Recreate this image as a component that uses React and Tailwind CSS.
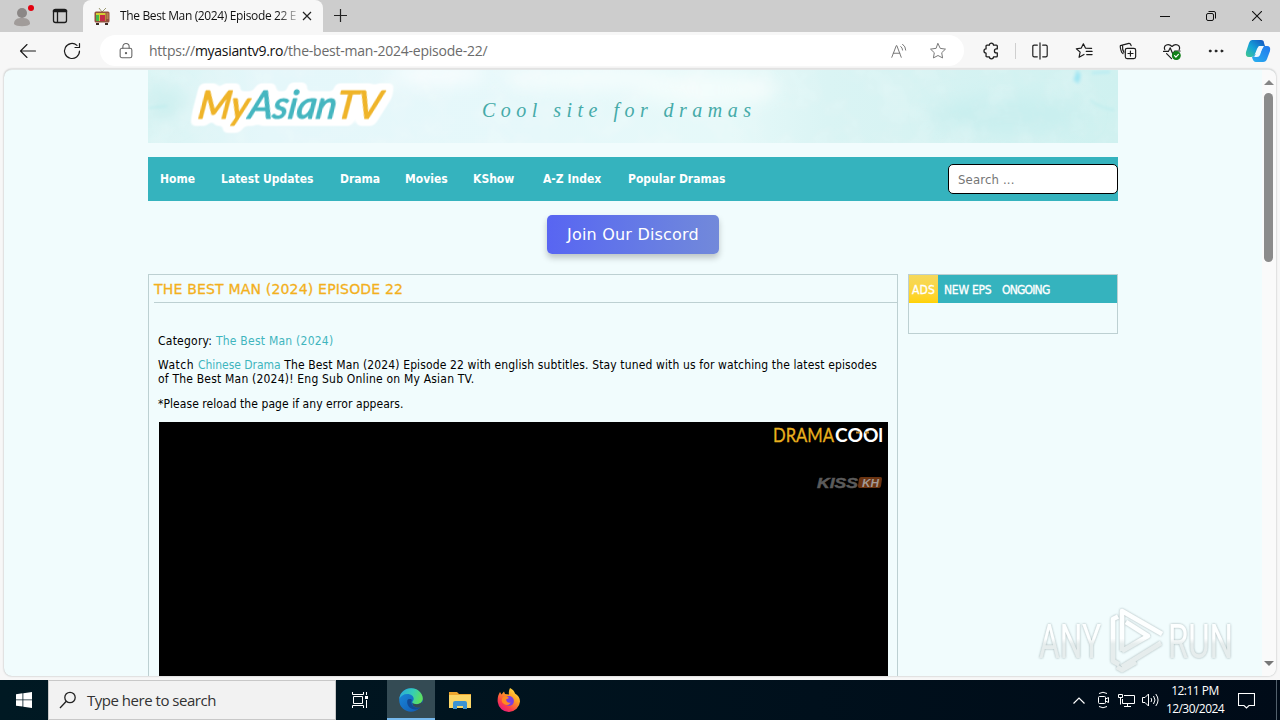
import React from "react";

const ui = "font-['Open_Sans','Noto_Sans',sans-serif]";
const tahoma = "font-['DejaVu_Sans_Condensed','DejaVu_Sans',sans-serif]";
const wide = "font-['DejaVu_Sans',sans-serif]";

function Icon({ size = 20, className = "", children, sw = 1.1, color = "#1b1b1b" }) {
  return (
    <svg width={size} height={size} viewBox="0 0 20 20" fill="none" stroke={color} strokeWidth={sw} strokeLinecap="round" strokeLinejoin="round" className={"shrink-0 " + className}>
      {children}
    </svg>
  );
}

function TabStrip() {
  return (
    <div className="flex h-8 shrink-0 bg-[#cdcdcd]">
      <div className="flex w-[83px] items-center rounded-br-md">
        <svg width="24" height="24" viewBox="0 0 24 24" className="ml-[12px]">
          <circle cx="10" cy="9" r="5" fill="#8b8786" />
          <path d="M2 20c0-5 3.500-6 8-6s8 1 8 6c-2 3-14 3-16 0z" fill="#a19c9a" />
          <circle cx="19" cy="4" r="3" fill="#e3000f" />
        </svg>
        <Icon size={20} className="ml-[14px]" sw={1.3}>
          <rect x="3.500" y="3.500" width="13" height="13" rx="2" />
          <path d="M4 5h12" strokeWidth="2.600" />
          <path d="M7.500 6v10" />
        </Icon>
      </div>
      <div className="flex w-[240px] items-center rounded-t-lg bg-[#f7f7f7]">
        <svg width="16" height="17" viewBox="0 0 16 17" className="ml-[11px]">
          <path d="M5 0l3 4 4-4" stroke="#9b9a72" fill="none" />
          <rect x="0.500" y="3.500" width="15" height="11" rx="1.500" fill="#93503c" />
          <rect x="2" y="5" width="9.500" height="8" fill="#d5ce33" />
          <rect x="2" y="7" width="3" height="6" fill="#47b84a" />
          <rect x="6" y="7" width="5" height="6" fill="#c52a48" />
          <path d="M12.500 6h2M12.500 8h2M12.500 10h2" stroke="#e0b35a" />
          <path d="M2 16h3M11 16h3" stroke="#3c2924" strokeWidth="2" />
        </svg>
        <div className={"ml-[10px] w-[176px] whitespace-nowrap text-[12px] leading-4 tracking-[-0.360px] text-[#111] [mask-image:linear-gradient(to_right,black_158px,transparent_182px)] " + ui}>
          The Best Man (2024) Episode 22 E
        </div>
        <svg width="10" height="10" viewBox="0 0 10 10" className="ml-[6px]" stroke="#222" strokeWidth="1.200"><path d="M1 1l8 8M9 1l-8 8" /></svg>
      </div>
      <svg width="15" height="15" viewBox="0 0 15 15" className="mt-[8px] ml-[10px]" stroke="#222" strokeWidth="1.200"><path d="M7.500 1v13M1 7.500h13" /></svg>
      <div className="ml-auto flex items-center">
        <svg width="10" height="10" viewBox="0 0 10 10" className="mr-[36px]" stroke="#111"><path d="M0 5.500h10" /></svg>
        <svg width="10" height="10" viewBox="0 0 10 10" className="mr-[36px]" fill="none" stroke="#111"><rect x="0.500" y="2.500" width="7" height="7" rx="1.500" /><path d="M2.500 .5H8q1.500 0 1.500 1.500v5.500" /></svg>
        <svg width="10" height="10" viewBox="0 0 10 10" className="mr-[18px]" stroke="#111" strokeWidth="1.100"><path d="M0 0l10 10M10 0L0 10" /></svg>
      </div>
    </div>
  );
}

function Toolbar() {
  return (
    <div className="flex h-[37px] shrink-0 items-center bg-[#f7f7f7]">
      <Icon className="ml-[18px]" size={20} sw={1.1}><path d="M17.500 10H2.500M9 3.500L2.500 10l6.500 6.500" /></Icon>
      <Icon className="ml-[24px]" size={20} sw={1.2}><path d="M17.500 10a7.500 7.500 0 1 1-2.500-5.600M17.500 2.500v4h-4.500" /></Icon>
      <div className="ml-[18px] flex h-[31px] w-[864px] items-center rounded-full bg-white">
        <Icon size={18} className="ml-[17px]" color="#666" sw={1.2}>
          <rect x="3.500" y="7" width="13" height="10.500" rx="2" /><path d="M6.500 7V5.200a3.500 3.500 0 0 1 7 0V7" /><circle cx="10" cy="12.300" r=".7" fill="#666" />
        </Icon>
        <div className={"ml-[14px] whitespace-nowrap text-[14px] leading-5 tracking-[-0.230px] text-[#6b6b6b] " + ui}>
          https://<span className="tracking-[-0.300px] text-[#111]">myasiantv9.ro</span>/the-best-man-2024-episode-22/
        </div>
        <Icon size={18} className="mr-[21px] ml-auto" color="#777" sw={1.1}>
          <path d="M2 17L7 4h.6L12.500 17M3.700 12.500h7.200M12 5q2 1.500 2 4M14 2.500q3.500 2.500 3.500 6.500" />
        </Icon>
        <Icon size={18} className="mr-[17px]" color="#777" sw={1.1}><path d="M10 1.800l2.500 5.300 5.800.8-4.200 4 1 5.800L10 15l-5.100 2.700 1-5.800-4.200-4 5.800-.8z" /></Icon>
      </div>
      <Icon size={18} className="ml-[18px]" sw={1.4}>
        <path d="M5.500 3.500h2.700a2.300 2.300 0 0 1 4.600 0H16q1 0 1 1v3.200h-1a2.200 2.200 0 0 0 0 4.400h1v3.400q0 1-1 1h-3.200a2.300 2.300 0 0 1-4.600 0H5.500q-1 0-1-1v-3.200a2.300 2.300 0 0 1 0-4.600V4.500q0-1 1-1z" />
      </Icon>
      <div className="ml-[15px] h-4 w-px bg-[#cfcfcf]" />
      <Icon size={18} className="ml-[15px]" sw={1.3}><path d="M10 1v18M7 3.500H3.500Q2 3.500 2 5v10q0 1.500 1.500 1.500H7M13 3.500h3.500Q18 3.500 18 5v10q0 1.500-1.500 1.500H13" /></Icon>
      <Icon size={18} className="ml-[26px]" sw={1.3}><path d="M10 13.800L4.500 17l1.200-5.800L1.500 7.500l5.500-.7L9.300 2l2.300 4.800 6.900.2M12.500 10.500H19M13 14h6" /></Icon>
      <Icon size={18} className="ml-[26px]" sw={1.3}><rect x="7" y="7" width="11.500" height="11.500" rx="2" /><path d="M12.700 10v5.600M10 12.800h5.600M4.500 13L3 11.500Q1 6 1.500 4l9.500-2.500q2-.2 2.500 2.500M4 4.500q-.5 4 1.500 7" /></Icon>
      <Icon size={18} className="ml-[26px]" sw={1.3}>
        <path d="M2 8.500C0 3.500 6 .8 10 5c4-4.200 10-1.500 8 3.500M.5 10.500H6l2-4 3 7 2-3.500h6M4 13l5.500 5.500" />
        <circle cx="14.800" cy="15" r="4.300" fill="#13801a" stroke="#13801a" /><path d="M12.800 15.200l1.500 1.500 2.800-3" stroke="#fff" />
      </Icon>
      <Icon size={18} className="ml-[26px]" sw={1}><g fill="#222"><circle cx="3.500" cy="10" r="1.100" /><circle cx="10" cy="10" r="1.100" /><circle cx="16.500" cy="10" r="1.100" /></g></Icon>
      <svg width="26" height="24" viewBox="0 0 26 24" className="ml-[20px]">
        <defs>
          <linearGradient id="c1" x1="0" y1="1" x2="1" y2="0"><stop stopColor="#43c98b" /><stop offset=".45" stopColor="#15a3d8" /><stop offset="1" stopColor="#154fc0" /></linearGradient>
          <linearGradient id="c2" x1="1" y1="0" x2="0" y2="1"><stop stopColor="#2277ee" /><stop offset="1" stopColor="#28b1ee" /></linearGradient>
        </defs>
        <path d="M7 1h9q3 0 3 3l1 3h-5q-2 0-3 3l-2 5q-1 3-4 3H4q-4 0-3-5l3-9q1-3 3-3z" fill="url(#c1)" />
        <path d="M19 7h3q4 0 3 5l-3 8q-1 3-4 3h-7q-3 0-4-5 2 0 3-3h4q1 0 2-3z" fill="url(#c2)" />
        <path d="M14 7h4l-3 9q-.7 2-3 2H9q1-1 2-4z" fill="#eef8ff" />
      </svg>
    </div>
  );
}

function Banner() {
  return (
    <div className="h-[73px] shrink-0 bg-[#daf4f4]">
      <svg width="970" height="73" viewBox="0 0 970 73">
        <defs>
          <linearGradient id="bg" x1="0" y1="0" x2="1" y2="0">
            <stop stopColor="#d9f4f4" /><stop offset=".12" stopColor="#e5f7fa" /><stop offset=".4" stopColor="#e6f8fa" /><stop offset=".6" stopColor="#e6f9f9" /><stop offset=".7" stopColor="#daf4f4" /><stop offset="1" stopColor="#cff1f0" />
          </linearGradient>
          <filter id="soft" x="-30%" y="-60%" width="160%" height="220%"><feGaussianBlur stdDeviation="9" /></filter>
          <filter id="small"><feGaussianBlur stdDeviation="1.500" /></filter>
          <filter id="cloud" x="0" y="0" width="100%" height="100%">
            <feTurbulence type="fractalNoise" baseFrequency=".03" numOctaves="4" seed="7" />
            <feColorMatrix values="0 0 0 0 1  0 0 0 0 1  0 0 0 0 1  1.800 0 0 0 -.72" />
          </filter>
          <filter id="halo" x="-15%" y="-50%" width="130%" height="200%" colorInterpolationFilters="sRGB">
            <feMorphology in="SourceAlpha" operator="dilate" radius="6" result="fat" />
            <feGaussianBlur in="fat" stdDeviation="2.500" />
            <feComponentTransfer result="round"><feFuncA type="linear" slope="4" intercept="-.9" /></feComponentTransfer>
            <feFlood floodColor="#fff" />
            <feComposite in2="round" operator="in" />
            <feMerge><feMergeNode /><feMergeNode in="SourceGraphic" /></feMerge>
          </filter>
        </defs>
        <rect width="970" height="73" fill="url(#bg)" />
        <g filter="url(#soft)">
          <ellipse cx="440" cy="8" rx="90" ry="12" fill="#f4fdfd" />
          <ellipse cx="560" cy="20" rx="70" ry="16" fill="#f3fdfc" />
          <ellipse cx="290" cy="4" rx="50" ry="12" fill="#f6fdfe" />
          <ellipse cx="15" cy="35" rx="22" ry="18" fill="#cff0f0" />
          <ellipse cx="860" cy="45" rx="80" ry="18" fill="#c9efef" />
        </g>
        <rect width="970" height="73" filter="url(#cloud)" opacity=".25" />
        <g filter="url(#small)">
          <path d="M929 1q6 3 1 12l-4-3zM944 3l18-1" stroke="#b4eaf2" strokeWidth="2" fill="#9ae4f2" />
          <path d="M1 38l18-2M942 30q10 8 24 10" stroke="#c0edee" strokeWidth="2" fill="none" />
        </g>
        <text transform="translate(49 48.500) skewX(-8)" textLength="183" lengthAdjust="spacingAndGlyphs" fontFamily="'Lato', 'Open Sans', sans-serif" fontSize="38" fontStyle="italic" fontWeight="400" strokeWidth="1.200" strokeLinejoin="round" filter="url(#halo)">
          <tspan fill="#efb429" stroke="#efb429">My</tspan><tspan fill="#45b6c0" stroke="#45b6c0">Asian</tspan><tspan fill="#efb429" stroke="#efb429">TV</tspan>
        </text>
        <text x="334" y="47" textLength="269" fontFamily="'Liberation Serif', serif" fontStyle="italic" fontSize="20" fill="#45aaa8">Cool site for dramas</text>
      </svg>
    </div>
  );
}

const nav = [
  ["Home", "w-[61px]"], ["Latest Updates", "w-[119px]"], ["Drama", "w-[65px]"], ["Movies", "w-[68px]"],
  ["KShow", "w-[70px]"], ["A-Z Index", "w-[85px]"], ["Popular Dramas", "w-[110px]"],
];

function Nav() {
  return (
    <div className={"mt-[14px] flex h-[44px] shrink-0 items-center bg-[#35b3be] pl-[12px] text-[12px] font-bold text-white " + tahoma}>
      {nav.map(([label, w]) => <a key={label} className={"pb-px whitespace-nowrap tracking-[0.010px] " + w}>{label}</a>)}
      <div className="ml-auto flex h-[30px] w-[170px] items-center rounded-[5px] border border-black bg-white pt-px pl-[9px] text-[13px] font-normal tracking-[0.150px] text-[#757575]">Search ...</div>
    </div>
  );
}

function Post() {
  return (
    <div className={"flex h-[410px] w-[750px] flex-col border border-[#bdd0d2] text-[12px] leading-[14px] text-black " + tahoma}>
      <h1 className={"ml-[5px] h-[28px] border-b border-[#bdd0d2] text-[14px] leading-[28px] font-normal text-[#f3b01c] [-webkit-text-stroke:0.300px_#f3b01c] " + wide}><span className="tracking-[0.190px]">THE BEST MAN (2024) EPISODE 22</span></h1>
      <div className="pl-[9px] whitespace-nowrap">
        <p className="mt-[31px] tracking-[0.240px]">Category: <a className="text-[#3fb5bd]">The Best Man (2024)</a></p>
        <p className="mt-[10px] tracking-[0.130px]"><span className="tracking-[0.500px]">Watch </span><a className="tracking-[-0.030px] text-[#3fb5bd]">Chinese Drama</a> The Best Man (2024) Episode 22 with english subtitles. Stay tuned with us for watching the latest episodes<br /><span className="tracking-[0.200px]">of The Best Man (2024)! Eng Sub Online on My Asian TV.</span></p>
        <p className="mt-[11px] tracking-[0.060px]">*Please reload the page if any error appears.</p>
      </div>
      <div className="mt-[11px] ml-[10px] w-[729px] flex-1 bg-black">
        <svg width="729" height="90" viewBox="0 0 729 90">
          <text x="614" y="19.500" textLength="61" lengthAdjust="spacingAndGlyphs" fontFamily="Lato, sans-serif" fontSize="20" fill="#e8b01e" stroke="#e8b01e" strokeWidth=".3">DRAMA</text>
          <text x="676" y="19.500" textLength="48" lengthAdjust="spacingAndGlyphs" fontFamily="Lato, sans-serif" fontSize="19" fontWeight="700" fill="#fff">COOl</text>
          <path d="M697 10.500h4M706 10.500h4" stroke="#c58b2a" strokeWidth="2" />
          <rect x="700" y="55" width="23" height="11" rx="2" fill="#8f4518" opacity=".75" transform="skewX(-8) translate(8 0)" />
          <text x="658" y="66" textLength="41" lengthAdjust="spacingAndGlyphs" fontFamily="'Liberation Sans', sans-serif" fontStyle="italic" fontWeight="700" fontSize="15.500" fill="#5b5b5b" stroke="#5b5b5b" strokeWidth=".5">KISS</text>
          <text x="703" y="65" textLength="17" lengthAdjust="spacingAndGlyphs" fontFamily="'Liberation Sans', sans-serif" fontStyle="italic" fontWeight="700" fontSize="11" fill="#a39a96">KH</text>
        </svg>
      </div>
    </div>
  );
}

function Sidebar() {
  return (
    <div className={"h-[60px] w-[210px] border border-[#bdd0d2] text-[12px] text-white " + tahoma}>
      <div className="flex h-[28px] items-center bg-[#35b3be] pt-px whitespace-nowrap [-webkit-text-stroke:0.300px_white]">
        <span className="-mt-px flex h-[28px] w-[29px] items-center bg-linear-to-b from-[#f6d95c] to-[#ffd200] pt-px pl-[3px] tracking-[0.100px]">ADS</span>
        <span className="w-[58px] pl-[6px] tracking-[-0.250px]">NEW EPS</span>
        <span className="pl-[6px] tracking-[-0.800px]">ONGOING</span>
      </div>
    </div>
  );
}

function Watermark() {
  return (
    <svg width="210" height="72" viewBox="0 0 210 72" className="absolute top-[536px] left-[1030px] overflow-visible opacity-85">
      <defs>
        <linearGradient id="wm" gradientUnits="userSpaceOnUse" x1="0" y1="0" x2="0" y2="68"><stop offset=".48" stopColor="#fff" /><stop offset=".56" stopColor="#e4eaea" /></linearGradient>
        <filter id="ws" filterUnits="userSpaceOnUse" x="0" y="0" width="210" height="72"><feDropShadow dx="0" dy="0" stdDeviation="1.300" floodColor="#7d9092" floodOpacity=".85" /></filter>
      </defs>
      <g filter="url(#ws)" fill="url(#wm)" fontFamily="Roboto, sans-serif" fontWeight="400" fontSize="48">
        <text x="5" y="52" textLength="62" lengthAdjust="spacingAndGlyphs">ANY</text>
        <text x="134" y="52" textLength="65" lengthAdjust="spacingAndGlyphs">RUN</text>
        <path d="M84 10.500l-5 2.500v42l6 3.500M88 45V5l40 23M88 61l39-24M88 45l26-15-22-14M83 61l5 3 14-8" fill="none" stroke="url(#wm)" strokeWidth="4.500" strokeLinejoin="round" />
      </g>
    </svg>
  );
}

function Page() {
  return (
    <div className="relative mx-[4px] flex h-[607px] w-[1272px] shrink-0 overflow-hidden rounded-lg border-t border-[#e3e6e6] bg-[#f1fcfd] shadow-[0_0_2px_#a8a8a8]">
      <div className="flex w-[1258px] flex-col items-center">
        <div className="flex w-[970px] flex-col">
          <Banner />
          <Nav />
          <div className={"mt-[14px] flex h-[39px] w-[172px] shrink-0 items-center justify-center self-center rounded-[5px] bg-linear-to-r from-[#5865f2] to-[#7289da] pt-px text-[16px] text-white shadow-[0_4px_6px_rgba(0,0,0,0.22)] " + wide}>
            <span className="tracking-[0.200px] whitespace-nowrap">Join Our Discord</span>
          </div>
          <div className="mt-[20px] flex items-start gap-[10px]">
            <Post />
            <Sidebar />
          </div>
        </div>
      </div>
      <div className="flex w-[14px] flex-col items-center bg-[#fafafa] pt-[10px] pr-[1px] pb-[10px]">
        <svg width="10" height="5" viewBox="0 0 10 5" className="shrink-0"><path d="M0 5l5-5 5 5z" fill="#858585" /></svg>
        <div className="mt-[8px] h-[169px] w-[9px] rounded-full bg-[#8b8b8b]" />
        <svg width="10" height="5" viewBox="0 0 10 5" className="mt-auto shrink-0"><path d="M0 0l5 5 5-5z" fill="#777" /></svg>
      </div>
      <Watermark />
    </div>
  );
}

function Taskbar() {
  return (
    <div className="flex h-10 shrink-0 bg-linear-to-r from-[#001923] to-[#000b18]">
      <div className="flex w-12 items-center justify-center">
        <svg width="16" height="16" viewBox="0 0 16 16" fill="#fff"><path d="M0 2.200L6.500 1.300v6.200H0zM7.300 1.200L16 0v7.500H7.300zM0 8.300h6.500v6.300L0 13.700zM7.300 8.300H16V16l-8.700-1.200z" /></svg>
      </div>
      <div className="flex w-[288px] items-center border border-[#c8c8c8] bg-[#f2f2f2]">
        <svg width="18" height="18" viewBox="0 0 18 18" className="ml-[10px]" fill="none" stroke="#222" strokeWidth="1.300"><circle cx="11" cy="6.500" r="5.200" /><path d="M7.300 10.300L1 17" /></svg>
        <span className={"ml-[10px] whitespace-nowrap text-[15px] tracking-[-0.480px] text-[#333] " + ui}>Type here to search</span>
      </div>
      <div className="flex w-[51px] items-center justify-center pr-[3px]">
        <svg width="18" height="18" viewBox="0 0 18 18" fill="none" stroke="#fff"><path d="M1.500 1v2.500h11V1M1.500 17v-2.500h11V17M2.500 5.500h9v7h-9zM15.500 1v3M15.500 9v8" /><rect x="14.500" y="5.500" width="2" height="2" fill="#fff" /></svg>
      </div>
      <div className="flex w-[48px] items-center justify-center border-b-2 border-[#76b9ed] bg-[#344b54]">
        <svg width="24" height="24" viewBox="0 0 24 24" className="mt-[2px]">
          <defs>
            <linearGradient id="e1" x1="0" y1=".2" x2="1" y2=".5"><stop stopColor="#2aa8dd" /><stop offset=".55" stopColor="#36cdb4" /><stop offset="1" stopColor="#5fe05a" /></linearGradient>
            <linearGradient id="e2" x1="0" y1="0" x2="1" y2="1"><stop stopColor="#1a8bdc" /><stop offset="1" stopColor="#1157b0" /></linearGradient>
          </defs>
          <circle cx="12" cy="12" r="11.800" fill="url(#e2)" />
          <path d="M.3 11C1 4.500 6 .2 12.200.2c6.500 0 11.600 5 11.600 10.300 0 3.500-3 5.700-6 5.700-2.800 0-4.600-.9-4.600-2 0-.8 1.500-1.300 1.500-3.500C14.700 8.200 12 6 8.500 6 4.500 6 1.500 8 .3 11z" fill="url(#e1)" />
          <path d="M8.300 12.500c-1 5 3.200 9 8 9 3 0 5-1.400 6-2.700-3 1.600-6.500 1-8.600-1.300-1.500-1.600-1.700-3.500-.8-5.500-.5-1.300-4-1.300-4.600.5z" fill="#124a95" />
          <path d="M13.500 14.500c.3 1.200 2 1.700 4.300 1.700 2.200 0 4.200-1 5.300-2.500l.7 3-2 2.500c-4.500 1.500-9-1-8.300-4.700z" fill="#344b54" />
        </svg>
      </div>
      <div className="flex w-[49px] items-center justify-center">
        <svg width="22" height="19" viewBox="0 0 22 19"><path d="M0 1h8l2 2h12v14H0z" fill="#eea62e" /><path d="M0 4h22v13H0z" fill="#fcd667" /><path d="M4 18v-6q0-2 2-2h10q2 0 2 2v6h-4v-3H8v3z" fill="#3d92d2" /></svg>
      </div>
      <div className="flex w-[49px] items-center justify-center">
        <svg width="24" height="24" viewBox="0 0 24 24">
          <defs><linearGradient id="ff" x1=".9" y1="0" x2=".2" y2="1"><stop stopColor="#fff04c" /><stop offset=".4" stopColor="#ff9b22" /><stop offset=".75" stopColor="#fb3c4c" /><stop offset="1" stopColor="#e31587" /></linearGradient></defs>
          <path d="M13 0c3 1.500 4.500 3.500 5 5.500 3 1.500 5 4.500 5 8A11.200 11.200 0 0 1 .7 14C.3 9.500 1.500 6.500 3 4l1.500 2.500L7 3.500 8 6l4 .5C11.500 4 12 2 13 0z" fill="url(#ff)" />
          <circle cx="12" cy="13" r="4.900" fill="#7a3ee0" /><path d="M6 9q4-2 6 1l-3 1.500q1 4 5 3-3 4-7 1.500T6 9z" fill="#ff8a20" />
        </svg>
      </div>
      <div className="ml-auto flex items-center">
        <svg width="12" height="7" viewBox="0 0 12 7" fill="none" stroke="#fff" strokeWidth="1.200"><path d="M.5 6.500L6 1l5.500 5.500" /></svg>
        <svg width="14" height="18" viewBox="0 0 14 18" className="ml-[12px]" fill="none" stroke="#fff"><rect x="1.500" y="5.500" width="7" height="7" rx="1" /><path d="M8.500 8l3-1.500v5L8.500 10M2 2.500q4-2.500 8 0M2 15.500q4 2.500 8 0" /></svg>
        <svg width="17" height="14" viewBox="0 0 17 14" className="ml-[7px]" fill="none" stroke="#fff"><path d="M6 2.500h10.500v8H4.500V6M9.500 10.500v3M6 13.500h7M.5 1.500h4v3h-4zM2.500 4.500v7" /></svg>
        <svg width="17" height="14" viewBox="0 0 17 14" className="ml-[7px]" fill="none" stroke="#fff"><path d="M.5 4.500H3L6.500 1v12L3 9.500H.5zM9 5q1.500 2 0 4M11.500 3q3 4 0 8M13.800 1q4.500 6 0 12" /></svg>
        <div className={"ml-[6px] w-[60px] text-center text-[12px] leading-[18px] whitespace-nowrap text-white " + ui}>
          <div className="tracking-[-0.500px]">12:11 PM</div>
          <div className="tracking-[-0.550px]">12/30/2024</div>
        </div>
        <svg width="17" height="17" viewBox="0 0 17 17" className="mr-[21px] ml-[13px]" fill="none" stroke="#fff" strokeWidth="1.100"><path d="M.5 1.500h16v12H11L8.500 16 6 13.500H.5z" /></svg>
        <div className="mr-[3px] h-10 w-px bg-[#52606c]" />
      </div>
    </div>
  );
}

export default function App() {
  return (
    <div className="flex h-[720px] w-[1280px] flex-col overflow-hidden bg-[#f7f7f7]">
      <TabStrip />
      <Toolbar />
      <Page />
      <div className="h-[4px] shrink-0" />
      <Taskbar />
    </div>
  );
}
